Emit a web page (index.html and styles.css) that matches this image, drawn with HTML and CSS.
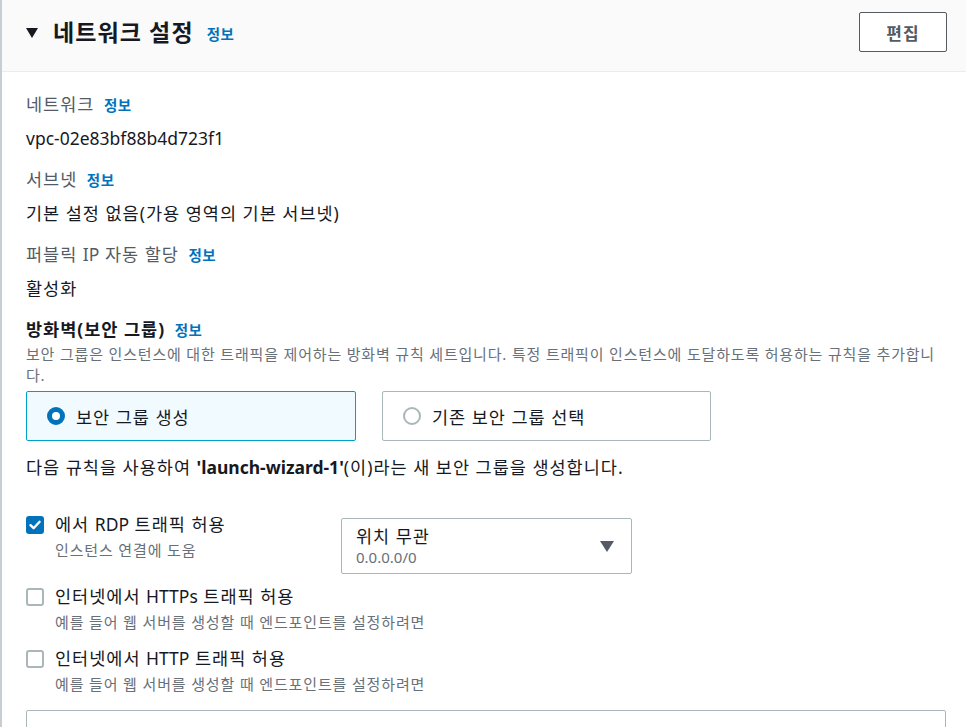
FILE: index.html
```html
<!DOCTYPE html>
<html lang="ko">
<head>
<meta charset="utf-8">
<link rel="stylesheet" href="styles.css">
</head>
<body>
<div class="panel">
  <div class="header">
    <div class="title-wrap">
      <span class="caret"></span>
      <h2 class="title">네트워크 설정</h2>
      <a class="info">정보</a>
    </div>
    <button class="edit">편집</button>
  </div>
  <div class="content">
    <div class="field">
      <div class="label">네트워크 <a class="info">정보</a></div>
      <div class="value"><span class="lat">vpc-02e83bf88b4d723f1</span></div>
    </div>
    <div class="field">
      <div class="label">서브넷 <a class="info">정보</a></div>
      <div class="value">기본 설정 없음(가용 영역의 기본 서브넷)</div>
    </div>
    <div class="field">
      <div class="label">퍼블릭 <span class="lat">IP</span> 자동 할당 <a class="info">정보</a></div>
      <div class="value">활성화</div>
    </div>
    <div class="firewall">
      <div class="label strong">방화벽(보안 그룹) <a class="info">정보</a></div>
      <div class="desc">보안 그룹은 인스턴스에 대한 트래픽을 제어하는 방화벽 규칙 세트입니다. 특정 트래픽이 인스턴스에 도달하도록 허용하는 규칙을 추가합니다.</div>
      <div class="tiles">
        <div class="tile selected"><span class="radio on"></span>보안 그룹 생성</div>
        <div class="tile"><span class="radio"></span>기존 보안 그룹 선택</div>
      </div>
      <p class="note">다음 규칙을 사용하여 <b class="lat">'launch-wizard-1'</b>(이)라는 새 보안 그룹을 생성합니다.</p>
      <div class="rule first">
        <span class="check on"><svg viewBox="0 0 18 18" width="18" height="18"><path d="M4.5 9.2 L7.6 12.2 L13.6 5.8" fill="none" stroke="#fff" stroke-width="2.4" stroke-linecap="round" stroke-linejoin="round"/></svg></span>
        <div class="rule-text narrow">
          <div class="rule-label">에서 <span class="lat">RDP</span> 트래픽 허용</div>
          <div class="rule-desc">인스턴스 연결에 도움</div>
        </div>
        <div class="select">
          <div class="select-text">
            <div class="select-main">위치 무관</div>
            <div class="select-sub lat">0.0.0.0/0</div>
          </div>
          <span class="tri"></span>
        </div>
      </div>
      <div class="rule">
        <span class="check"></span>
        <div class="rule-text">
          <div class="rule-label">인터넷에서 <span class="lat">HTTPs</span> 트래픽 허용</div>
          <div class="rule-desc">예를 들어 웹 서버를 생성할 때 엔드포인트를 설정하려면</div>
        </div>
      </div>
      <div class="rule">
        <span class="check"></span>
        <div class="rule-text">
          <div class="rule-label">인터넷에서 <span class="lat">HTTP</span> 트래픽 허용</div>
          <div class="rule-desc">예를 들어 웹 서버를 생성할 때 엔드포인트를 설정하려면</div>
        </div>
      </div>
      <div class="bottom-box"></div>
    </div>
  </div>
</div>
</body>
</html>
```
FILE: styles.css
```css
html, body {
  margin: 0;
  padding: 0;
  background: #fff;
}
body {
  font-family: "Noto Sans", "Noto Sans CJK KR", sans-serif;
  color: #16191f;
  font-size: 17.5px;
  letter-spacing: 1px;
  overflow: hidden;
  height: 727px;
}
.lat { letter-spacing: 0; }
.panel {
  border-left: 2px solid #c7cdd1;
  min-height: 727px;
  box-sizing: border-box;
}
.header {
  height: 72px;
  box-sizing: border-box;
  background: #fafafa;
  border-bottom: 1px solid #eaeded;
  display: flex;
  align-items: flex-start;
  justify-content: space-between;
  padding: 12px 19px 0 24px;
}
.title-wrap {
  display: flex;
  align-items: center;
  height: 40px;
}
.caret {
  width: 0;
  height: 0;
  border-left: 6px solid transparent;
  border-right: 6px solid transparent;
  border-top: 10px solid #16191f;
  margin-right: 15px;
  margin-top: 1px;
}
.title {
  margin: 0;
  font-size: 23px;
  font-weight: 700;
  line-height: 30px;
  margin-right: 13px;
  letter-spacing: 1.1px;
}
.info {
  color: #0073bb;
  font-size: 14.5px;
  font-weight: 700;
  line-height: 16px;
  text-decoration: none;
  letter-spacing: 0.5px;
}
.title-wrap .info { margin-top: 3px; }
.edit {
  width: 88px;
  height: 40px;
  background: #fff;
  border: 1px solid #545b64;
  border-radius: 2px;
  font-family: inherit;
  font-size: 17px;
  letter-spacing: 1px;
  font-weight: 700;
  color: #545b64;
  padding: 0;
}
.content {
  padding: 21px 20px 0 24px;
}
.field {
  margin-bottom: 19px;
}
.label {
  color: #545b64;
  line-height: 22px;
  height: 22px;
}
.label .info { margin-left: 4px; }
.value {
  line-height: 22px;
  margin-top: 12px;
}
.label.strong {
  color: #16191f;
  font-weight: 700;
}
.desc {
  font-size: 15px;
  color: #687078;
  line-height: 21px;
  margin-top: 4px;
  letter-spacing: 0.82px;
}
.tiles {
  display: flex;
  gap: 26px;
  margin-top: 5px;
}
.tile {
  width: 329px;
  height: 50px;
  box-sizing: border-box;
  border: 1px solid #aab7b8;
  border-radius: 2px;
  display: flex;
  align-items: center;
  padding-left: 20px;
}
.tile.selected {
  background: #f1faff;
  border-color: #00a1c9;
  width: 330px;
}
.radio {
  width: 18px;
  height: 18px;
  box-sizing: border-box;
  border-radius: 50%;
  border: 2px solid #aab7b8;
  margin-right: 11px;
  background: #fff;
}
.radio.on {
  border: 5px solid #0073bb;
}
.note {
  margin: 15px 0 0;
  line-height: 22px;
}
.note b { font-weight: 700; }
.rule {
  display: flex;
  align-items: flex-start;
  margin-top: 15px;
}
.rule.first { margin-top: 35px; }
.check {
  width: 18px;
  height: 18px;
  box-sizing: border-box;
  border: 2px solid #aab7b8;
  border-radius: 3px;
  margin-top: 3px;
  margin-right: 11px;
  flex: none;
  display: block;
}
.check.on {
  background: #0073bb;
  border: none;
}
.check svg { display: block; }
.rule-text.narrow {
  width: 286px;
  flex: none;
}
.rule-label {
  line-height: 22px;
}
.rule-desc {
  font-size: 15px;
  color: #687078;
  line-height: 20px;
  margin-top: 5px;
  letter-spacing: 0.85px;
}
.select {
  width: 291px;
  height: 56px;
  box-sizing: border-box;
  border: 1px solid #aab7b8;
  border-radius: 2px;
  margin-top: 5px;
  margin-bottom: -4px;
  display: flex;
  align-items: center;
  justify-content: space-between;
  padding: 0 17px 0 14px;
}
.select-main { line-height: 22px; }
.select-sub { font-size: 15px; color: #687078; line-height: 20px; }
.tri {
  width: 0;
  height: 0;
  border-left: 7px solid transparent;
  border-right: 7px solid transparent;
  border-top: 11px solid #545b64;
}
.bottom-box {
  margin-top: 16px;
  height: 40px;
  border: 1px solid #aab7b8;
  border-radius: 2px;
}
```
